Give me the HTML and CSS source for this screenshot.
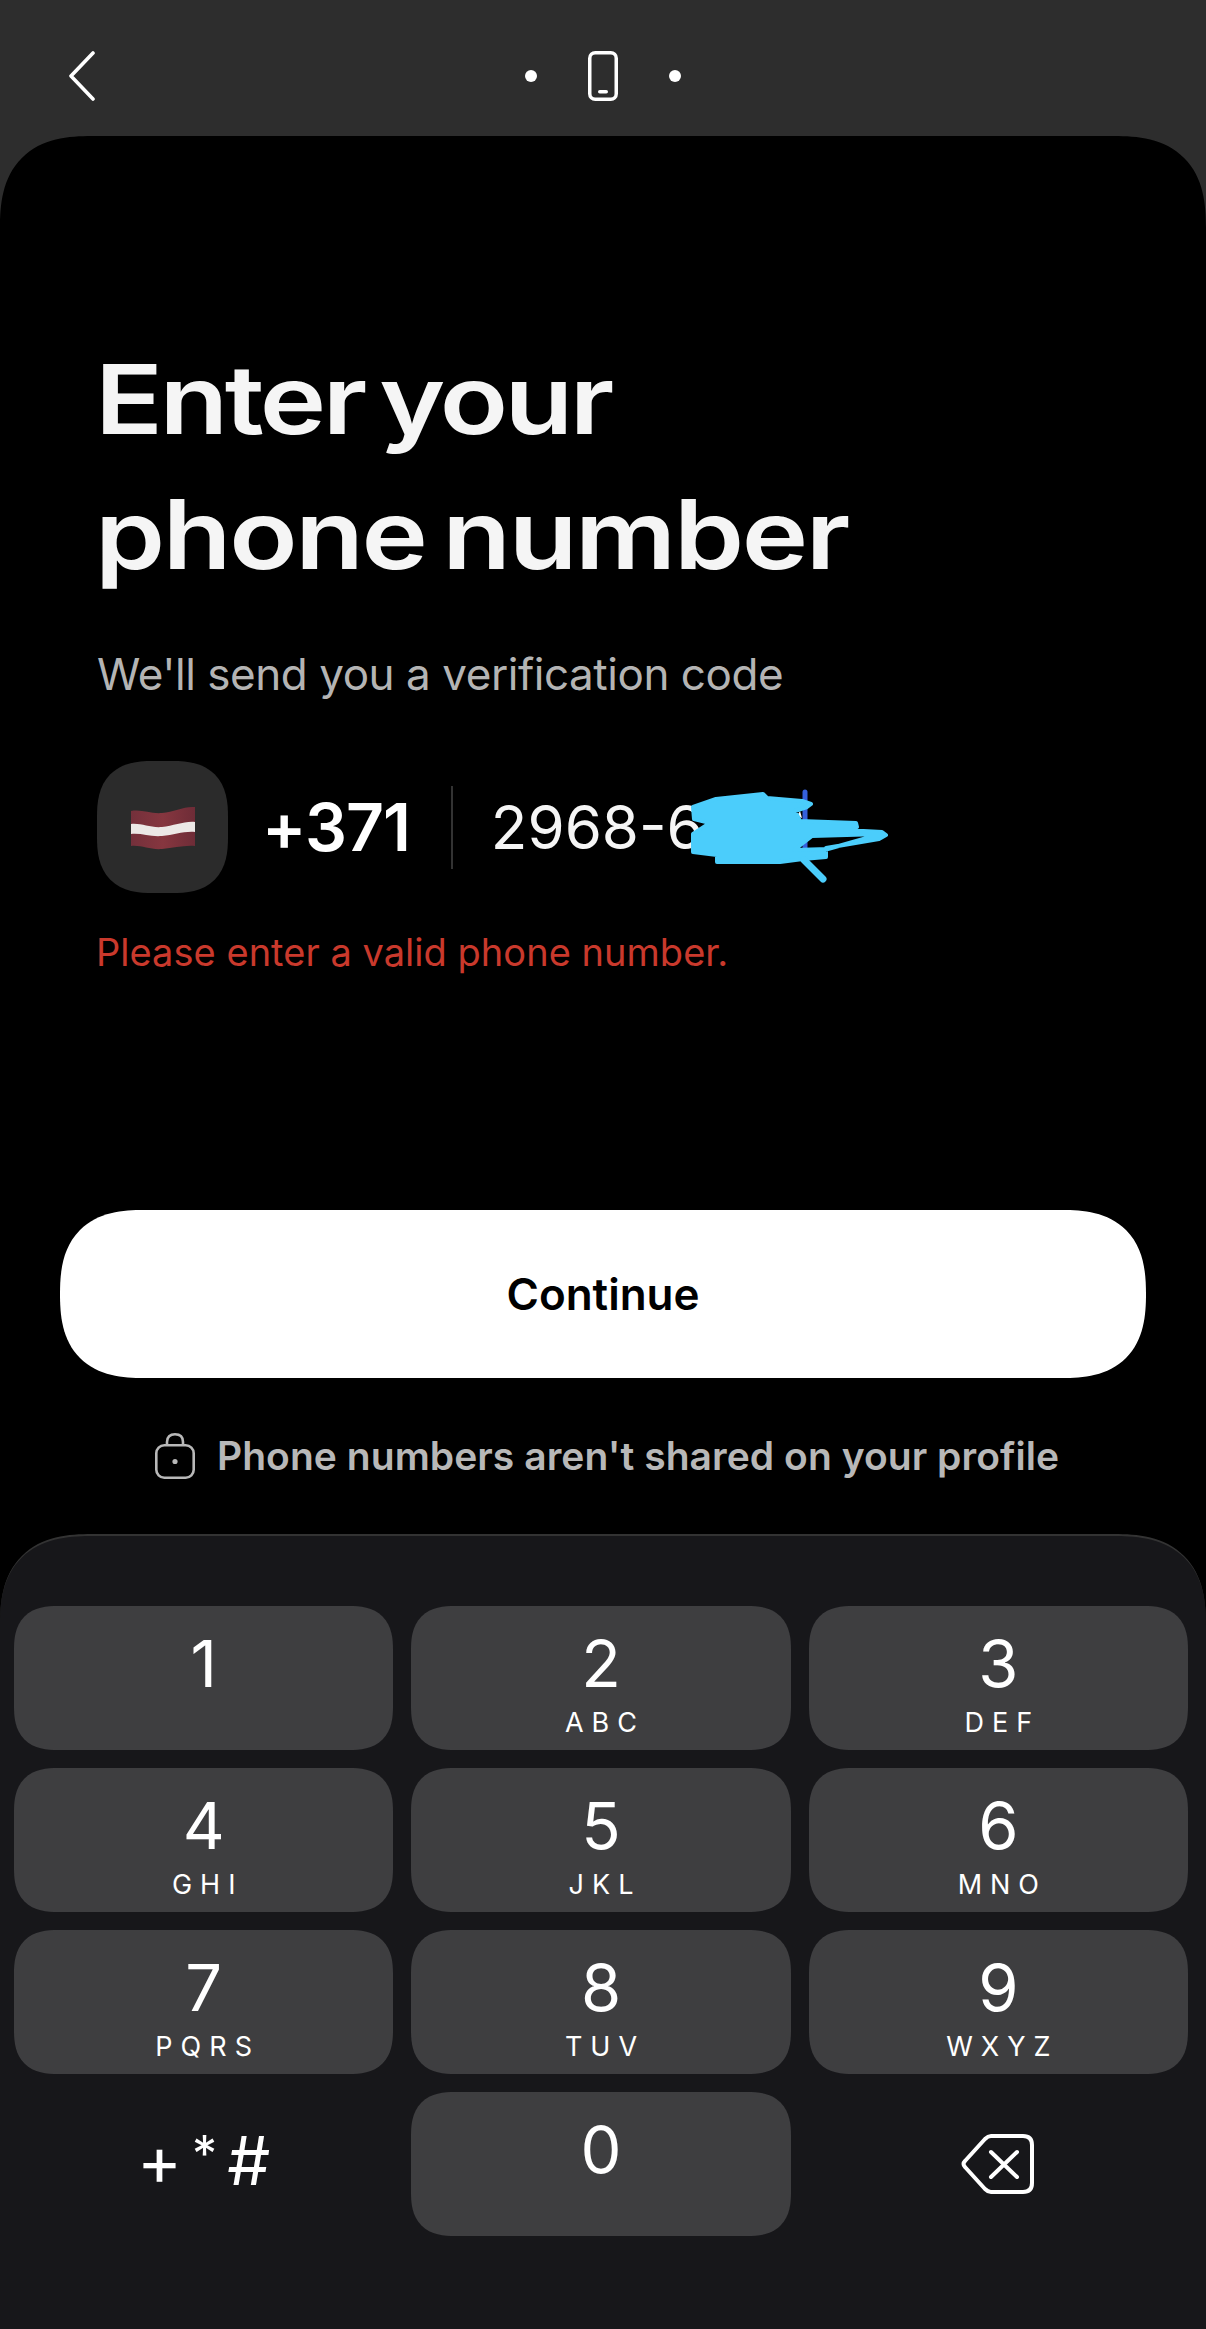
FILE: index.html
```html
<!doctype html>
<html lang="en">
<head>
    <meta charset="utf-8">
    <meta name="viewport" content="width=device-width, initial-scale=1">
    <title>Enter your phone number</title>
    <link rel="stylesheet" href="styles.css">
</head>
<body>

<div class="top-bar">
    <svg class="back-icon" viewBox="0 0 28 50" fill="none" stroke="#fff" stroke-width="3.6" stroke-linecap="round" stroke-linejoin="round">
        <path d="M25 2 L3 25 L25 48"/>
    </svg>
    <div class="steps">
        <span class="step-dot"></span>
        <svg class="phone-icon" viewBox="0 0 30 50" fill="none">
            <rect x="1.75" y="1.75" width="26.5" height="46.5" rx="5.5" stroke="#fff" stroke-width="3.5"/>
            <rect x="10" y="39" width="10" height="3.5" rx="1.75" fill="#fff"/>
        </svg>
        <span class="step-dot"></span>
    </div>
</div>

<div class="sheet">
    <div class="main">
        <h1 class="title"><span class="title-first">Enter your</span><span>phone number</span></h1>
        <p class="subtitle">We'll send you a verification code</p>

        <div class="phone-row">
            <div class="flag-box">
                <svg class="flag" viewBox="0 0 66 46">
                    <defs>
                        <linearGradient id="flag-shade" x1="0" y1="0" x2="1" y2="0">
                            <stop offset="0" stop-color="#74303b"/>
                            <stop offset="0.5" stop-color="#86363f"/>
                            <stop offset="1" stop-color="#6e2c37"/>
                        </linearGradient>
                    </defs>
                    <path d="M1 7 C12 5 20 10 32 9 C44 8 54 2 65 3 V42 C54 41 44 44 32 45 C20 46 12 41 1 42 Z" fill="url(#flag-shade)"/>
                    <path d="M1 20 C12 19 20 24 32 23 C44 22 54 17 65 18 V28 C54 27 44 31 32 32 C20 33 12 29 1 30 Z" fill="#ece8e6"/>
                </svg>
            </div>
            <div class="dial-code">+371</div>
            <div class="divider"></div>
            <div class="number">2968-6</div>
            <svg class="scribble" viewBox="0 0 230 130" stroke-linecap="round" stroke-linejoin="round">
                <path d="M125 22 V78" stroke="#3560dc" stroke-width="5" fill="none"/>
                <path d="M117 46 L120 41 L122 48 Z" fill="#fff"/>
                <path fill-rule="evenodd" fill="#4bcdfb" stroke="#4bcdfb" stroke-width="4" d="M13 37 L36 29 L83 24 L87 28 L122 31 L131 34 L127 37 L115 41 L120 51 L176 53 L177 57 L165 60 L202 62 L206 65 L199 69 L146 78 L146 87 L123 89 L100 92 L37 92 L37 85 L13 82 L13 64 L30 53 L14 49 Z M114 80 L132 66 L201 64 L148 79 Z"/>
                <path d="M124 90 L143 109" stroke="#4bcdfb" stroke-width="7" fill="none"/>
            </svg>
        </div>

        <p class="error">Please enter a valid phone number.</p>
    </div>

    <div class="actions">
        <button class="continue-button">Continue</button>
        <div class="privacy-note">
            <svg class="lock-icon" viewBox="0 0 40 46" fill="none" stroke="#b8b8b8" stroke-width="2.6">
                <rect x="1.3" y="12.3" width="37.4" height="32.4" rx="8"/>
                <path d="M12 12 V9 C12 4 15 1.3 20 1.3 C25 1.3 28 4 28 9 V12"/>
                <circle cx="20" cy="28.5" r="2.6" fill="#b8b8b8" stroke="none"/>
            </svg>
            <span>Phone numbers aren't shared on your profile</span>
        </div>
    </div>

    <div class="keypad">
        <div class="key"><span class="digit">1</span></div>
        <div class="key"><span class="digit">2</span><span class="letters">ABC</span></div>
        <div class="key"><span class="digit">3</span><span class="letters">DEF</span></div>
        <div class="key"><span class="digit">4</span><span class="letters">GHI</span></div>
        <div class="key"><span class="digit">5</span><span class="letters">JKL</span></div>
        <div class="key"><span class="digit">6</span><span class="letters">MNO</span></div>
        <div class="key"><span class="digit">7</span><span class="letters">PQRS</span></div>
        <div class="key"><span class="digit">8</span><span class="letters">TUV</span></div>
        <div class="key"><span class="digit">9</span><span class="letters">WXYZ</span></div>
        <div class="key key-plain symbols"><span>+</span><span class="star">*</span><span>#</span></div>
        <div class="key"><span class="digit">0</span></div>
        <div class="key key-plain">
            <svg class="backspace-icon" viewBox="0 0 74 60" fill="none" stroke="#fff" stroke-width="4" stroke-linejoin="round" stroke-linecap="round">
                <path d="M30 2 H62 C68 2 71 5 71 11 V49 C71 55 68 58 62 58 H30 C27 58 26 57 24 55 L4 33 C2 31 2 29 4 27 L24 5 C26 3 27 2 30 2 Z"/>
                <path d="M30 18 L56 43 M56 18 L30 43"/>
            </svg>
        </div>
    </div>
</div>

</body>
</html>
```

FILE: styles.css
```css
* {
    box-sizing: border-box;
}

html, body {
    margin: 0;
    height: 100%;
}

body {
    display: flex;
    flex-direction: column;
    min-height: 2329px;
    overflow: hidden;
    background-color: #2d2d2d;
    color: #fff;
    font-family: 'Inter', 'Roboto', sans-serif;
}

.top-bar {
    position: relative;
    flex: none;
    display: flex;
    align-items: center;
    justify-content: center;
    height: 136px;
    padding-top: 16px;
}

.back-icon {
    position: absolute;
    left: 68px;
    top: 51px;
    width: 28px;
    height: 50px;
}

.steps {
    display: flex;
    align-items: center;
    gap: 51px;
}

.step-dot {
    width: 12px;
    height: 12px;
    border-radius: 50%;
    background-color: #fff;
}

.phone-icon {
    width: 30px;
    height: 50px;
}

.sheet {
    flex: 1;
    display: flex;
    flex-direction: column;
    background-color: #000;
    border-radius: 92px 92px 0 0;
    corner-shape: superellipse(1.35);
}

.main {
    height: 1074px;
    padding: 196px 0 0 97px;
}

.title {
    margin: 0 0 0 -2px;
    font-size: 96px;
    font-weight: 600;
    line-height: 135px;
    color: #f5f5f5;
    letter-spacing: -2px;
    word-spacing: -8px;
}

.title span {
    display: block;
    width: fit-content;
    transform: scaleX(1.17);
    transform-origin: left center;
}

.title .title-first {
    letter-spacing: -3px;
}

.subtitle {
    margin: 42px 0 0;
    font-size: 44px;
    line-height: 60px;
    letter-spacing: -0.45px;
    color: #b4b4b4;
}

.phone-row {
    position: relative;
    display: flex;
    align-items: center;
    margin-top: 57px;
}

.flag-box {
    display: flex;
    align-items: center;
    justify-content: center;
    width: 131px;
    height: 132px;
    border-radius: 56px;
    corner-shape: superellipse(1.35);
    background-color: #2b2b2b;
}

.flag {
    width: 66px;
    height: 46px;
}

.dial-code {
    margin-left: 34px;
    font-size: 66px;
    font-weight: 600;
    letter-spacing: -1px;
}

.divider {
    width: 2px;
    height: 83px;
    margin: 0 38px 0 41px;
    background-color: #333;
}

.number {
    font-size: 60px;
    color: #f5f5f5;
}

.scribble {
    position: absolute;
    left: 583px;
    top: 9px;
    width: 230px;
    height: 130px;
}

.error {
    margin: 37px 0 0 -1px;
    font-size: 38px;
    line-height: 44px;
    letter-spacing: 0.03px;
    color: #c9392c;
}

.actions {
    display: flex;
    flex-direction: column;
    align-items: center;
    padding: 0 60px;
}

.continue-button {
    width: 100%;
    height: 168px;
    border: none;
    border-radius: 84px;
    corner-shape: superellipse(1.35);
    background-color: #fff;
    color: #000;
    font-family: inherit;
    font-size: 44px;
    font-weight: 600;
}

.privacy-note {
    display: flex;
    align-items: center;
    gap: 22px;
    margin: 54px 0 0 8px;
    font-size: 39px;
    font-weight: 600;
    line-height: 48px;
    letter-spacing: 0.05px;
    color: #b8b8b8;
}

.lock-icon {
    width: 40px;
    height: 46px;
}

.keypad {
    flex: 1;
    display: grid;
    grid-template-columns: repeat(3, 1fr);
    grid-auto-rows: 144px;
    gap: 18px;
    align-content: start;
    margin-top: 54px;
    padding: 70px 18px 0 14px;
    background-color: #17171a;
    border-top: 2px solid #333;
    border-radius: 92px 92px 0 0;
    corner-shape: superellipse(1.35);
}

.key {
    display: flex;
    flex-direction: column;
    align-items: center;
    padding-top: 22px;
    border-radius: 44px;
    corner-shape: superellipse(1.35);
    background-color: #3e3e40;
}

.key-plain {
    flex-direction: row;
    justify-content: center;
    padding-top: 0;
    background-color: transparent;
}

.digit {
    font-size: 65px;
    line-height: 72px;
}

.letters {
    margin-top: 7px;
    font-size: 27px;
    line-height: 32px;
    letter-spacing: 8px;
    margin-right: -8px;
}

.symbols {
    gap: 10px;
    padding-bottom: 8px;
    font-size: 68px;
}

.star {
    align-self: flex-start;
    margin-top: 32px;
    font-size: 50px;
}

.backspace-icon {
    width: 74px;
    height: 60px;
}
```
